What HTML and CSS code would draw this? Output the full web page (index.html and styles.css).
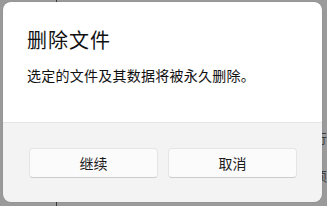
FILE: index.html
```html
<!DOCTYPE html>
<html lang="zh">
<head>
<meta charset="utf-8">
<link rel="stylesheet" href="styles.css">
</head>
<body>
<div class="backdrop">
  <div class="bg-left"></div>
  <div class="bg-rule"></div>
  <div class="bg-mid"></div>
  <div class="bg-text">
    <span>行</span>
    <span>s</span>
    <span>须</span>
  </div>
</div>
<div class="dialog">
  <div class="dialog-body">
    <h1 class="title">删除文件</h1>
    <p class="message">选定的文件及其数据将被永久删除。</p>
  </div>
  <div class="dialog-footer">
    <button class="btn">继续</button>
    <button class="btn">取消</button>
  </div>
</div>
</body>
</html>
```
FILE: styles.css
```css
html, body {
  margin: 0;
  padding: 0;
  width: 327px;
  height: 206px;
  overflow: hidden;
}
body {
  background: #9a9a9a;
  font-family: "Noto Sans CJK SC", "Noto Sans", sans-serif;
  position: relative;
}
.backdrop {
  display: flex;
  height: 206px;
}
.bg-left {
  width: 58px;
}
.bg-rule {
  width: 1px;
  background: #3a3a3a;
}
.bg-mid {
  width: 264px;
}
.bg-text {
  display: flex;
  flex-direction: column;
  padding-top: 128px;
  font-size: 13px;
  line-height: 19px;
  color: #3c3c3c;
}
.dialog {
  position: absolute;
  left: 3px;
  top: 2px;
  width: 319px;
  height: 200px;
  border-radius: 8px;
  overflow: hidden;
  display: flex;
  flex-direction: column;
  box-shadow: 0 0 1px rgba(0,0,0,0.3);
}
.dialog-body {
  background: #ffffff;
  height: 120px;
  padding: 24px 24px 0 24px;
  box-sizing: border-box;
}
.title {
  margin: 0;
  font-size: 20px;
  line-height: 28px;
  font-weight: 400;
  letter-spacing: 1px;
  color: #111111;
}
.message {
  margin: 11px 0 0 0;
  font-size: 14px;
  line-height: 20px;
  letter-spacing: 0.25px;
  color: #111111;
}
.dialog-footer {
  flex: 1;
  background: #f3f3f3;
  border-top: 1px solid #e5e5e5;
  display: flex;
  gap: 10px;
  padding: 25px 25px 0 26px;
}
.btn {
  width: 129px;
  height: 30px;
  border: 1px solid #e5e5e5;
  border-bottom-color: #cccccc;
  border-radius: 4px;
  background: #fbfbfb;
  font-family: "Noto Sans CJK SC", "Noto Sans", sans-serif;
  font-size: 14px;
  color: #1b1b1b;
  padding: 0;
}
```
